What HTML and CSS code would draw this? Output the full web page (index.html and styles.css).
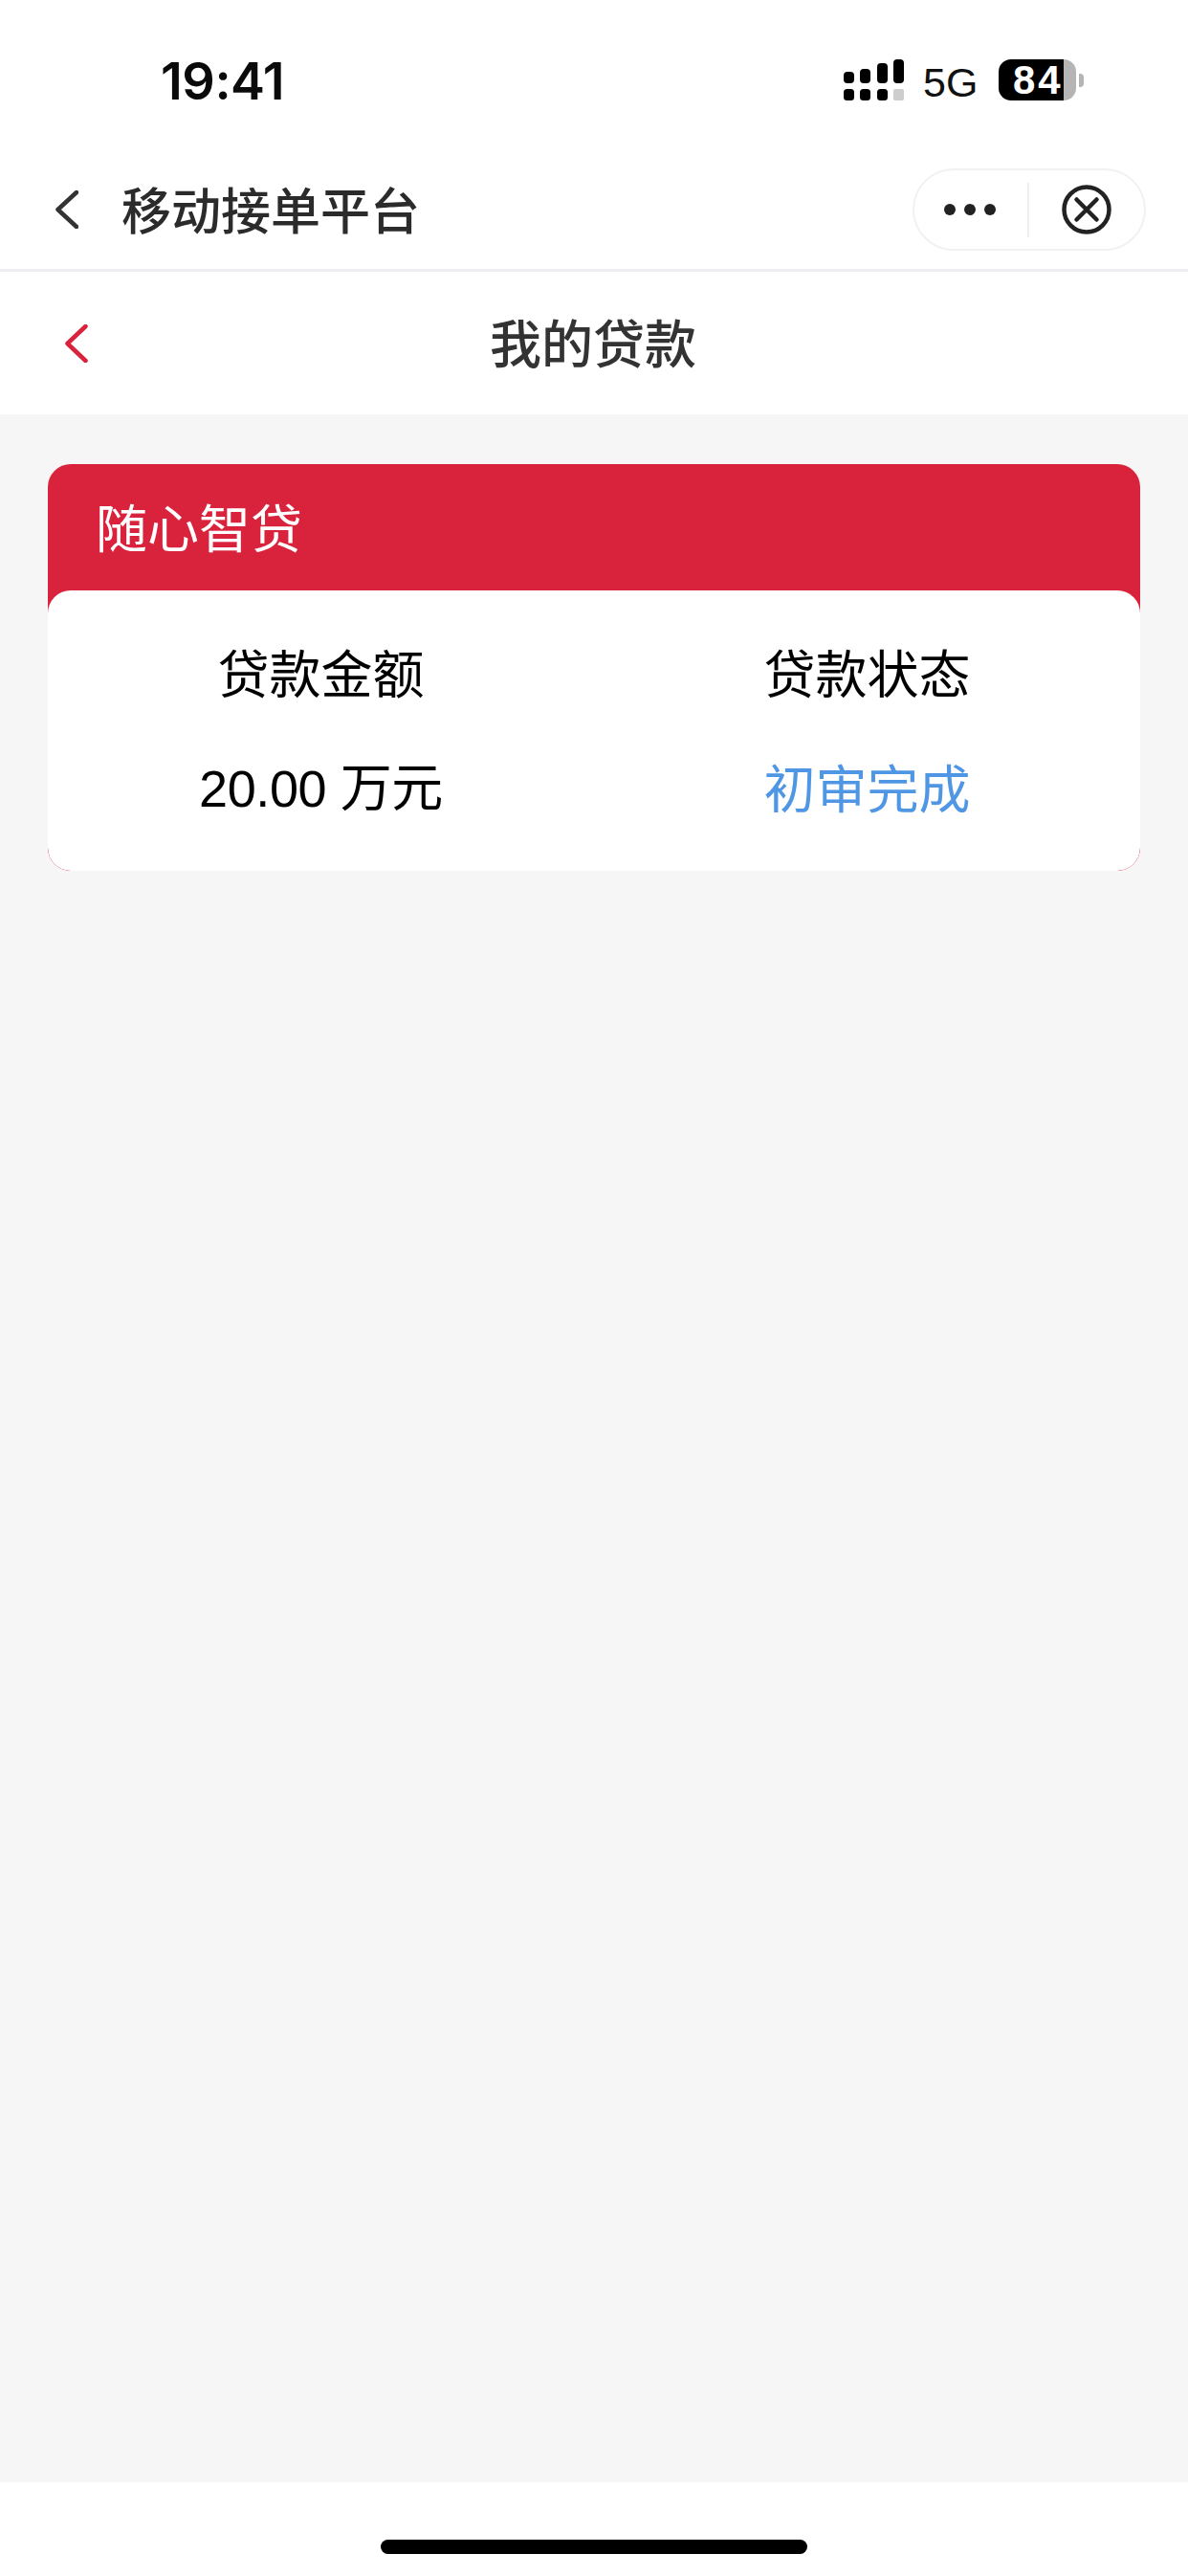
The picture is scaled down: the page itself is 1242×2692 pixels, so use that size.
FILE: index.html
```html
<!DOCTYPE html>
<html lang="zh-CN">
<head>
<meta charset="utf-8">
<title>我的贷款</title>
<link rel="stylesheet" href="styles.css">
</head>
<body>
<div class="app">
  <header class="top">
    <div class="status">
      <span class="time">19:41</span>
      <div class="status-right">
        <svg class="signal" width="63" height="43" viewBox="0 0 63 43">
          <rect x="0" y="13" width="11" height="12" rx="4"/>
          <rect x="17" y="10" width="11" height="15" rx="4"/>
          <rect x="35" y="4" width="11" height="21" rx="4"/>
          <rect x="52" y="0" width="11" height="25" rx="4"/>
          <rect x="0" y="31" width="11" height="12" rx="3.5"/>
          <rect x="17" y="31" width="11" height="12" rx="3.5"/>
          <rect x="35" y="31" width="11" height="12" rx="3.5"/>
          <rect class="signal-off" x="52" y="31" width="11" height="12" rx="2"/>
        </svg>
        <span class="net">5G</span>
        <div class="battery">
          <div class="battery-body"><span class="battery-num">84</span></div>
          <span class="battery-nub"></span>
        </div>
      </div>
    </div>
    <div class="mini-nav">
      <svg class="mini-back" width="24" height="40" viewBox="0 0 24 40"><path d="M22 2 2.5 20 22 38"/></svg>
      <span class="mini-title">移动接单平台</span>
      <div class="capsule">
        <div class="capsule-more"><i></i><i></i><i></i></div>
        <span class="capsule-line"></span>
        <div class="capsule-close">
          <svg width="52" height="52" viewBox="0 0 52 52"><circle cx="26" cy="26" r="23.5"/><path d="M15.5 15.5 36.5 36.5M36.5 15.5 15.5 36.5"/></svg>
        </div>
      </div>
    </div>
  </header>
  <div class="page-head">
    <svg class="page-back" width="24" height="40" viewBox="0 0 24 40"><path d="M21.5 2 2.5 20l19 18"/></svg>
    <h1 class="page-title">我的贷款</h1>
  </div>
  <main class="content">
    <section class="card">
      <div class="card-title">随心智贷</div>
      <div class="card-body">
        <div class="col">
          <div class="label">贷款金额</div>
          <div class="value">20.00 万元</div>
        </div>
        <div class="col">
          <div class="label">贷款状态</div>
          <div class="value value-status">初审完成</div>
        </div>
      </div>
    </section>
  </main>
  <footer class="home"><span class="home-bar"></span></footer>
</div>
</body>
</html>
```
FILE: styles.css
```css
* { box-sizing: border-box; }
html, body { margin: 0; padding: 0; background: #fff; }
body { font-family: "Liberation Sans", "Noto Sans CJK SC", sans-serif; color: #000; }
.app { display: flex; flex-direction: column; height: 2692px; width: 1242px; overflow: hidden; }

.top { height: 284px; border-bottom: 3px solid #eeeef2; background: #fff; flex: none; display: flex; flex-direction: column; }
.status { height: 176px; flex: none; display: flex; justify-content: space-between; align-items: flex-start; padding: 62px 109px 0 168px; }
.time { font-family: Inter, sans-serif; font-weight: 600; font-size: 54px; line-height: 46px; letter-spacing: -0.5px; color: #0a0a0a; }
.status-right { display: flex; align-items: flex-start; }
.signal { fill: #000; flex: none; }
.signal-off { fill: #cdcdcd; }
.net { font-size: 43px; line-height: 44px; width: 56px; margin-left: 20px; margin-top: 2px; white-space: nowrap; color: #111; }
.battery { display: flex; align-items: center; margin-left: 23px; }
.battery-body { width: 81px; height: 43px; border-radius: 13px; background: linear-gradient(90deg, #000 0, #000 68px, #b5b5b5 68px); display: flex; align-items: center; padding-left: 15px; }
.battery-num { color: #fff; font-weight: 700; font-size: 42px; line-height: 43px; letter-spacing: 3px; }
.battery-nub { width: 5px; height: 14px; background: #b5b5b5; border-radius: 0 4px 4px 0; margin-left: 3px; }

.mini-nav { height: 86px; flex: none; display: flex; align-items: center; padding: 0 44px 0 58px; }
.mini-back { fill: none; stroke: #333; stroke-width: 4.5; stroke-linecap: round; stroke-linejoin: round; flex: none; }
.mini-title { font-family: "Noto Sans CJK SC", sans-serif; font-weight: 500; font-size: 52px; line-height: 70px; padding-bottom: 3px; color: #2b2b2b; margin-left: 45px; }
.capsule { margin-left: auto; width: 244px; height: 86px; border: 2px solid #f1f1f1; border-radius: 43px; display: flex; align-items: center; background: #fff; }
.capsule-more { width: 118px; display: flex; justify-content: center; gap: 9px; padding-right: 3px; }
.capsule-more i { width: 12px; height: 12px; border-radius: 50%; background: #222; display: block; }
.capsule-line { width: 2px; height: 57px; background: #eeeeee; flex: none; }
.capsule-close { flex: 1; display: flex; justify-content: center; }
.capsule-close svg { fill: none; stroke: #222; stroke-width: 4.5; stroke-linecap: round; }

.page-head { height: 149px; flex: none; background: #fff; display: flex; align-items: center; justify-content: center; position: relative; }
.page-back { position: absolute; left: 68px; top: 55px; fill: none; stroke: #d9233c; stroke-width: 4.5; stroke-linecap: round; stroke-linejoin: round; }
.page-title { margin: 0; padding: 0 2px 3px 0; font-family: "Noto Sans CJK SC", sans-serif; font-weight: 500; font-size: 54px; line-height: 76px; color: #333; }

.content { flex: 1; background: #f6f6f6; padding: 52px 50px 0; }
.card { height: 425px; background: #d9233c; border-radius: 24px; overflow: hidden; display: flex; flex-direction: column; }
.card-title { height: 132px; flex: none; padding-left: 50px; font-family: "Noto Sans CJK SC", sans-serif; font-size: 54px; line-height: 129px; color: #fff; }
.card-body { flex: 1; background: #fff; border-radius: 24px; display: grid; grid-template-columns: 1fr 1fr; padding-top: 47px; }
.col { display: flex; flex-direction: column; align-items: center; gap: 46px; }
.label, .value { font-size: 54px; line-height: 76px; }
.label { font-family: "Noto Sans CJK SC", sans-serif; }
.value { color: #000; letter-spacing: -0.4px; }
.value-status { font-family: "Noto Sans CJK SC", sans-serif; color: #4f97e5; letter-spacing: 0; line-height: 72px; }

.home { height: 98px; flex: none; background: #fff; display: flex; justify-content: center; padding-top: 60px; }
.home-bar { width: 446px; height: 15px; border-radius: 8px; background: #000; display: block; }
```
